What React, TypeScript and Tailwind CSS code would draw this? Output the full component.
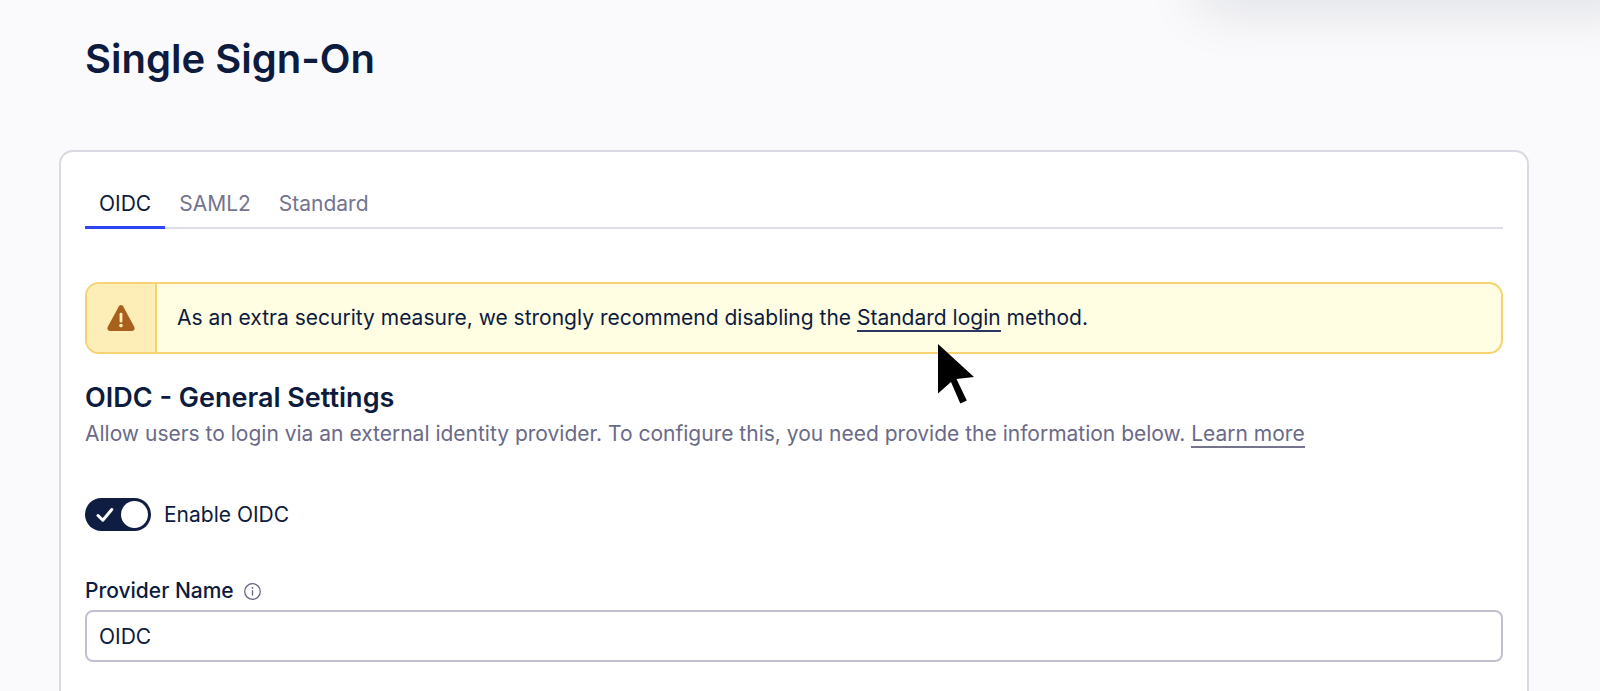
import { useState } from "react";

const tabs = ["OIDC", "SAML2", "Standard"];

function WarningIcon() {
  return (
    <svg viewBox="0 0 28 26" className="h-[26px] w-7" aria-hidden="true">
      <path
        d="M11.9 1.2 Q14 -1 16.1 1.2 L27.2 21.8 Q28.6 25.4 25.2 26 H2.8 Q-0.6 25.4 0.8 21.8 Z"
        fill="#a8601c"
      />
      <path d="M14 9.2v7" stroke="#fdf0b8" strokeWidth="2.8" strokeLinecap="round" />
      <circle cx="14" cy="20.6" r="1.8" fill="#fdf0b8" />
    </svg>
  );
}

function InfoIcon() {
  return (
    <svg viewBox="0 0 17 17" className="size-[17px]" fill="none" aria-hidden="true">
      <circle cx="8.5" cy="8.5" r="7.8" stroke="#62627f" strokeWidth="1.2" />
      <path d="M8.5 7.2v5.4" stroke="#62627f" strokeWidth="1.3" />
      <circle cx="8.5" cy="4.9" r="0.9" fill="#62627f" />
    </svg>
  );
}

function Pointer() {
  return (
    <svg
      viewBox="0 0 36 60"
      className="pointer-events-none absolute top-[62px] left-[853px] h-[60px] w-9"
      aria-hidden="true"
    >
      <path d="M0 0 L36 33 L18.5 35 L28.8 56.5 L22.3 59.5 L13 38 L0 49.5 Z" fill="#000" />
    </svg>
  );
}

export default function App() {
  const [active, setActive] = useState("OIDC");
  const [enabled, setEnabled] = useState(true);
  const [name, setName] = useState("OIDC");

  return (
    <div className="relative flex h-screen flex-col overflow-hidden bg-[#fafafc] font-['Inter',sans-serif] text-[21px] leading-7 text-[#0d1b3e]">
      <div className="absolute -top-10 -right-10 left-[1200px] h-10 shadow-[0_4px_56px_rgba(13,20,50,0.15)]" />
      <header className="px-[85px] pt-[35px] pb-[67px]">
        <h1 className="text-[40px] leading-[48px] font-semibold">Single Sign-On</h1>
      </header>
      <main className="mr-[71px] ml-[59px] flex-1 rounded-t-[14px] border-2 border-b-0 border-[#d9d9e3] bg-white px-6 pt-8">
        <div role="tablist" className="flex border-b-2 border-[#dfdfe8]">
          {tabs.map((tab) => (
            <button
              key={tab}
              type="button"
              role="tab"
              aria-selected={tab === active}
              onClick={() => setActive(tab)}
              className={
                tab === active
                  ? "-mb-0.5 h-[45px] border-b-[3px] border-[#2f45f5] px-3.5 pb-0.5"
                  : "-mb-0.5 h-[45px] border-b-[3px] border-transparent px-3.5 pb-0.5 text-[#74748f]"
              }
            >
              {tab}
            </button>
          ))}
        </div>

        <div className="relative mt-[53px]">
          <div
            role="alert"
            className="flex h-[72px] items-stretch overflow-hidden rounded-[14px] border-2 border-[#f6d272] bg-[#fffee2]"
          >
            <div className="flex w-[70px] items-center justify-center border-r-2 border-[#f6d272] bg-[#fdeeb8]">
              <WarningIcon />
            </div>
            <p className="self-center px-5">
              As an extra security measure, we strongly recommend disabling the{" "}
              <a href="#standard" className="border-b-2 border-[#2a3762]">
                Standard login
              </a>{" "}
              method.
            </p>
          </div>
          <Pointer />
        </div>

        <h2 className="mt-7 text-[27px] leading-8 font-semibold">OIDC - General Settings</h2>
        <p className="mt-1.5 text-[#6a6a88]">
          Allow users to login via an external identity provider. To configure this, you need
          provide the information below.{" "}
          <a href="#learn" className="border-b-2 border-[#74748e]">
            Learn more
          </a>
        </p>

        <label className="mt-[50px] flex w-fit cursor-pointer items-center gap-[13px]">
          <input
            type="checkbox"
            role="switch"
            checked={enabled}
            onChange={(e) => setEnabled(e.target.checked)}
            className="peer sr-only"
          />
          <span className="flex h-[33px] w-[66px] items-center justify-between rounded-full bg-[#0f1d42] pr-[3px] pl-[11px] peer-not-checked:flex-row-reverse peer-not-checked:bg-[#8c8ca5]">
            <svg viewBox="0 0 18 16" className="h-4 w-[18px]" fill="none" aria-hidden="true">
              <path
                d="M2 8.5 L6.8 13.2 L15.8 2.5"
                stroke="#fff"
                strokeWidth="3"
                strokeLinecap="round"
                strokeLinejoin="round"
              />
            </svg>
            <span className="size-[27px] rounded-full bg-white" />
          </span>
          Enable OIDC
        </label>

        <div className="mt-[46px] flex items-center gap-2.5">
          <label htmlFor="provider" className="font-medium">
            Provider Name
          </label>
          <InfoIcon />
        </div>
        <input
          id="provider"
          type="text"
          value={name}
          onChange={(e) => setName(e.target.value)}
          className="mt-[5px] block h-[52px] w-full rounded-lg border-2 border-[#c0c0d0] bg-white px-3 outline-none"
        />
      </main>
    </div>
  );
}
